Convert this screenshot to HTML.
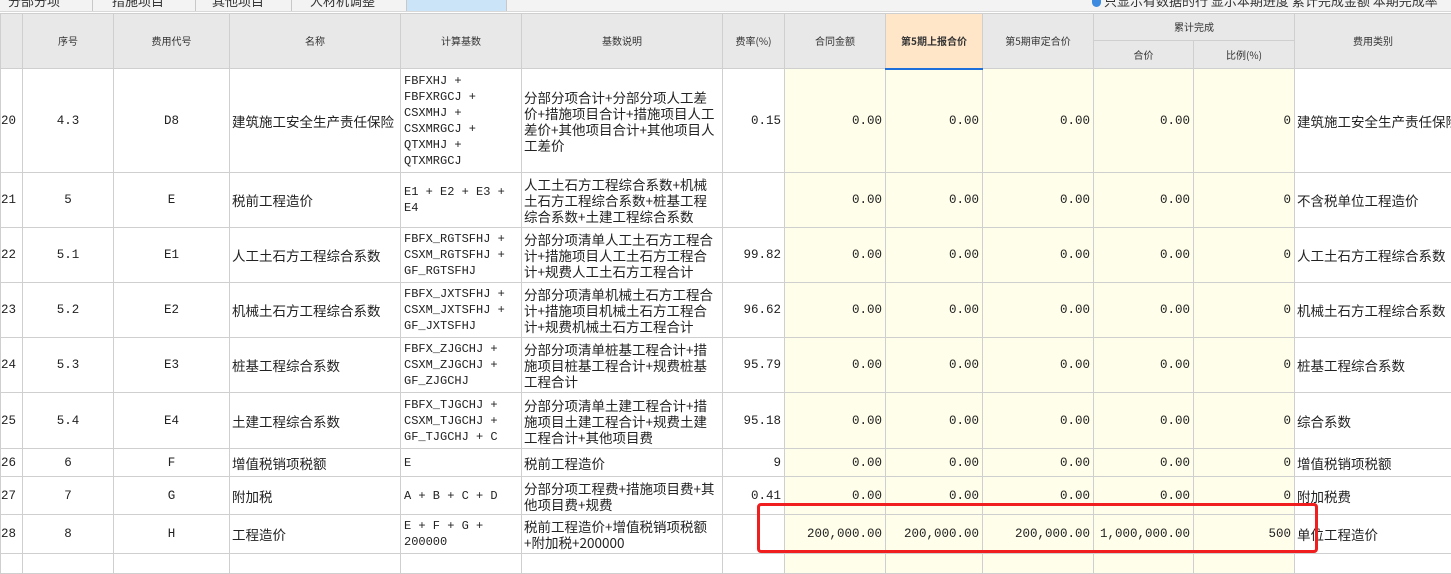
<!DOCTYPE html>
<html><head><meta charset="utf-8"><style>
body{margin:0;width:1451px;height:557px;overflow:hidden;background:#fff;position:relative;font-family:"Liberation Mono","Noto Sans CJK SC",monospace;}
.tabs{position:absolute;left:0;top:0;width:1451px;height:11px;background:#f3f3f3;border-bottom:1px solid #d8d8d8;overflow:hidden}
.tab{position:absolute;top:0;height:11px;border-right:1px solid #c8c8c8;}
.tt{position:absolute;top:-9px;font-family:"Noto Sans CJK SC",sans-serif;font-size:13px;color:#333;white-space:nowrap}
table{position:absolute;left:0;top:13px;border-collapse:collapse;table-layout:fixed;width:1451px;}
td,th{border:1px solid #cfcfcf;padding:0 3px;overflow:hidden;white-space:nowrap;font-size:12.5px;line-height:16px;color:#222;}
th{background:#e8e8e8;font-weight:normal;font-size:10px;font-family:"Noto Sans CJK SC",sans-serif;color:#333;}
th.hl{background:#ffe6c8;font-weight:bold;border-bottom:2px solid #1e6fd9;}
td.c{text-align:center}
td.r{text-align:right}
td.y{background:#fffeea;text-align:right}
td.f{font-size:12px;white-space:normal;word-break:normal;overflow-wrap:normal;line-height:16px;vertical-align:middle;padding-right:3px}
td.d{white-space:normal;font-family:"Noto Sans CJK SC",sans-serif;font-size:13.5px;line-height:16px;padding:0 2px;word-break:break-all}
td.n{font-family:"Noto Sans CJK SC",sans-serif;font-size:13.5px;padding-left:2px}
td.rn{padding:0;text-align:left}
.box{position:absolute;left:757px;top:503px;width:555px;height:44px;border:3px solid #f01e1e;border-radius:4px;}
</style></head><body>
<div class="tabs">
<div class="tab" style="left:0;width:92px"></div>
<div class="tab" style="left:93px;width:102px"></div>
<div class="tab" style="left:196px;width:95px"></div>
<div class="tab" style="left:292px;width:114px"></div>
<div class="tab" style="left:407px;width:99px;background:#cce4f7"></div>
<div class="tt" style="left:8px">分部分项</div><div class="tt" style="left:112px">措施项目</div><div class="tt" style="left:212px">其他项目</div><div class="tt" style="left:310px">人材机调整</div>
<div style="position:absolute;left:1092px;top:0;width:9px;height:7px;background:#3d8be0;border-radius:0 0 5px 5px"></div>
<div class="tt" style="left:1104px">只显示有数据的行 显示本期进度 累计完成金额 本期完成率</div>
</div>
<table>
<colgroup><col style="width:22px"><col style="width:91px"><col style="width:116px"><col style="width:171px"><col style="width:121px"><col style="width:201px"><col style="width:62px"><col style="width:101px"><col style="width:97px"><col style="width:111px"><col style="width:100px"><col style="width:101px"><col style="width:157px"></colgroup>
<tr style="height:27px"><th rowspan="2"></th><th rowspan="2">序号</th><th rowspan="2">费用代号</th><th rowspan="2">名称</th><th rowspan="2">计算基数</th><th rowspan="2">基数说明</th><th rowspan="2">费率(%)</th><th rowspan="2">合同金额</th><th rowspan="2" class="hl">第5期上报合价</th><th rowspan="2">第5期审定合价</th><th colspan="2">累计完成</th><th rowspan="2">费用类别</th></tr>
<tr style="height:28px"><th>合价</th><th>比例(%)</th></tr>
<tr style="height:104px"><td class="rn">20</td><td class="c">4.3</td><td class="c">D8</td><td class="n">建筑施工安全生产责任保险</td><td class="f">FBFXHJ + FBFXRGCJ + CSXMHJ + CSXMRGCJ + QTXMHJ + QTXMRGCJ</td><td class="d">分部分项合计+分部分项人工差价+措施项目合计+措施项目人工差价+其他项目合计+其他项目人工差价</td><td class="r">0.15</td><td class="y">0.00</td><td class="y">0.00</td><td class="y">0.00</td><td class="y">0.00</td><td class="y">0</td><td class="n">建筑施工安全生产责任保险</td></tr>
<tr style="height:55px"><td class="rn">21</td><td class="c">5</td><td class="c">E</td><td class="n">税前工程造价</td><td class="f">E1 + E2 + E3 + E4</td><td class="d">人工土石方工程综合系数+机械土石方工程综合系数+桩基工程综合系数+土建工程综合系数</td><td class="r"></td><td class="y">0.00</td><td class="y">0.00</td><td class="y">0.00</td><td class="y">0.00</td><td class="y">0</td><td class="n">不含税单位工程造价</td></tr>
<tr style="height:55px"><td class="rn">22</td><td class="c">5.1</td><td class="c">E1</td><td class="n">人工土石方工程综合系数</td><td class="f">FBFX_RGTSFHJ + CSXM_RGTSFHJ + GF_RGTSFHJ</td><td class="d">分部分项清单人工土石方工程合计+措施项目人工土石方工程合计+规费人工土石方工程合计</td><td class="r">99.82</td><td class="y">0.00</td><td class="y">0.00</td><td class="y">0.00</td><td class="y">0.00</td><td class="y">0</td><td class="n">人工土石方工程综合系数</td></tr>
<tr style="height:55px"><td class="rn">23</td><td class="c">5.2</td><td class="c">E2</td><td class="n">机械土石方工程综合系数</td><td class="f">FBFX_JXTSFHJ + CSXM_JXTSFHJ + GF_JXTSFHJ</td><td class="d">分部分项清单机械土石方工程合计+措施项目机械土石方工程合计+规费机械土石方工程合计</td><td class="r">96.62</td><td class="y">0.00</td><td class="y">0.00</td><td class="y">0.00</td><td class="y">0.00</td><td class="y">0</td><td class="n">机械土石方工程综合系数</td></tr>
<tr style="height:55px"><td class="rn">24</td><td class="c">5.3</td><td class="c">E3</td><td class="n">桩基工程综合系数</td><td class="f">FBFX_ZJGCHJ + CSXM_ZJGCHJ + GF_ZJGCHJ</td><td class="d">分部分项清单桩基工程合计+措施项目桩基工程合计+规费桩基工程合计</td><td class="r">95.79</td><td class="y">0.00</td><td class="y">0.00</td><td class="y">0.00</td><td class="y">0.00</td><td class="y">0</td><td class="n">桩基工程综合系数</td></tr>
<tr style="height:56px"><td class="rn">25</td><td class="c">5.4</td><td class="c">E4</td><td class="n">土建工程综合系数</td><td class="f">FBFX_TJGCHJ + CSXM_TJGCHJ + GF_TJGCHJ + C</td><td class="d">分部分项清单土建工程合计+措施项目土建工程合计+规费土建工程合计+其他项目费</td><td class="r">95.18</td><td class="y">0.00</td><td class="y">0.00</td><td class="y">0.00</td><td class="y">0.00</td><td class="y">0</td><td class="n">综合系数</td></tr>
<tr style="height:28px"><td class="rn">26</td><td class="c">6</td><td class="c">F</td><td class="n">增值税销项税额</td><td class="f">E</td><td class="d">税前工程造价</td><td class="r">9</td><td class="y">0.00</td><td class="y">0.00</td><td class="y">0.00</td><td class="y">0.00</td><td class="y">0</td><td class="n">增值税销项税额</td></tr>
<tr style="height:38px"><td class="rn">27</td><td class="c">7</td><td class="c">G</td><td class="n">附加税</td><td class="f">A + B + C + D</td><td class="d">分部分项工程费+措施项目费+其他项目费+规费</td><td class="r">0.41</td><td class="y">0.00</td><td class="y">0.00</td><td class="y">0.00</td><td class="y">0.00</td><td class="y">0</td><td class="n">附加税费</td></tr>
<tr style="height:39px"><td class="rn">28</td><td class="c">8</td><td class="c">H</td><td class="n">工程造价</td><td class="f">E + F + G + 200000</td><td class="d">税前工程造价+增值税销项税额+附加税+200000</td><td class="r"></td><td class="y">200,000.00</td><td class="y">200,000.00</td><td class="y">200,000.00</td><td class="y">1,000,000.00</td><td class="y">500</td><td class="n">单位工程造价</td></tr>
<tr style="height:20px"><td></td><td></td><td></td><td></td><td></td><td></td><td></td><td class="y"></td><td class="y"></td><td class="y"></td><td class="y"></td><td class="y"></td><td></td></tr>
</table>
<div class="box"></div>
</body></html>
